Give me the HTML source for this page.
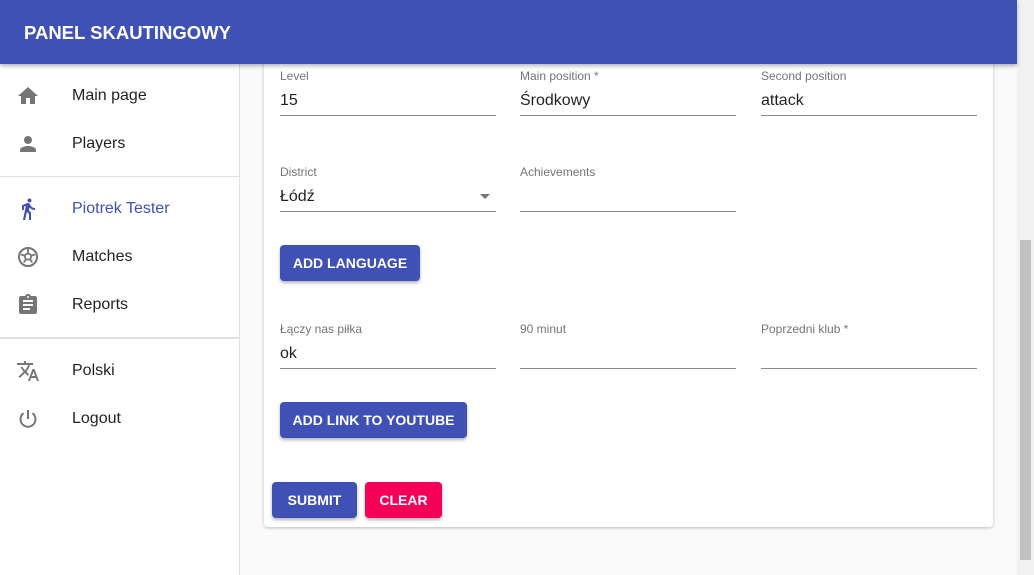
<!DOCTYPE html>
<html><head><meta charset="utf-8"><style>
*{box-sizing:border-box;margin:0;padding:0}
body{width:1034px;height:575px;overflow:hidden;background:#fafafa;font-family:"Liberation Sans",sans-serif;position:relative}
.hdr{position:absolute;left:0;top:0;width:1017px;height:64px;background:#3f51b5;box-shadow:0 2px 4px rgba(0,0,0,.3);z-index:5;color:#fff;font-weight:bold;font-size:18.5px;padding:22px 24px}
.side{position:absolute;left:0;top:0;width:240px;height:575px;background:#fff;border-right:1px solid #e0e0e0}
.it{position:absolute;left:0;width:239px;height:48px;font-size:16px;color:rgba(0,0,0,.87)}
.it span{position:absolute;left:72px;top:15px}
.it svg{position:absolute;left:16px;top:12px}
.hr{position:absolute;left:0;width:239px;height:1px;background:#e0e0e0}
.scroll{position:absolute;left:1017px;top:0;width:17px;height:575px;background:#f1f1f1}
.thumb{position:absolute;left:1020px;top:240px;width:11px;height:320px;background:#c1c1c1}
.card{position:absolute;left:264px;top:40px;width:729px;height:487px;background:#fff;box-shadow:0 1px 3px rgba(0,0,0,.25);border-radius:4px}
.f{position:absolute;width:216px;height:50px;border-bottom:1px solid #8a8a8a}
.f .l{position:absolute;top:3px;left:0;font-size:12px;color:#757575}
.f .v{position:absolute;top:26px;left:0;font-size:16px;color:rgba(0,0,0,.87)}
.btn{position:absolute;height:36px;background:#3f51b5;color:#fff;font-weight:bold;font-size:14px;border-radius:4px;box-shadow:0 2px 3px rgba(0,0,0,.3);text-align:center;line-height:36px}
</style></head><body>
<div class="side">
<div class="it" style="top:72px"><svg width="24" height="24" viewBox="0 0 24 24"><path d="M10 20v-6h4v6h5v-8h3L12 3 2 12h3v8z" fill="#757575"/></svg><span>Main page</span></div>
<div class="it" style="top:120px"><svg width="24" height="24" viewBox="0 0 24 24"><path d="M12 12c2.2 0 4-1.8 4-4s-1.8-4-4-4-4 1.8-4 4 1.8 4 4 4zm0 2c-2.7 0-8 1.3-8 4v2h16v-2c0-2.7-5.3-4-8-4z" fill="#757575"/></svg><span>Players</span></div>
<div class="hr" style="top:176px"></div>
<div class="it" style="top:185px;color:#3f51b5"><svg width="24" height="24" viewBox="0 0 24 24"><path d="M13.5 5.5c1.1 0 2-.9 2-2s-.9-2-2-2-2 .9-2 2 .9 2 2 2zM9.8 8.9L7 23h2.1l1.8-8 2.1 2v6h2v-7.5l-2.1-2 .6-3C14.8 12 16.8 13 19 13v-2c-1.9 0-3.5-1-4.3-2.4l-1-1.6c-.4-.6-1-1-1.7-1-.3 0-.5.1-.8.1L6 8.3V13h2V9.6l1.8-.7" fill="#3f51b5"/></svg><span>Piotrek Tester</span></div>
<div class="it" style="top:233px"><svg width="24" height="24" viewBox="0 0 24 24"><circle cx="12" cy="12" r="9" fill="none" stroke="#757575" stroke-width="2"/><path d="M12 8l3.5 2.5-1.3 4h-4.4l-1.3-4z M12 8V4 M15.5 10.5l3.5-1 M14.2 14.5l2 3 M9.8 14.5l-2 3 M8.5 10.5l-3.5-1" fill="none" stroke="#757575" stroke-width="1.8"/></svg><span>Matches</span></div>
<div class="it" style="top:281px"><svg width="24" height="24" viewBox="0 0 24 24"><path d="M19 3h-4.2C14.4 1.8 13.3 1 12 1s-2.4.8-2.8 2H5c-1.1 0-2 .9-2 2v14c0 1.1.9 2 2 2h14c1.1 0 2-.9 2-2V5c0-1.1-.9-2-2-2zm-7 0c.6 0 1 .4 1 1s-.4 1-1 1-1-.4-1-1 .4-1 1-1zm2 14H7v-2h7v2zm3-4H7v-2h10v2zm0-4H7V7h10v2z" fill="#757575"/></svg><span>Reports</span></div>
<div class="hr" style="top:337px;height:2px"></div>
<div class="it" style="top:347px"><svg width="24" height="24" viewBox="0 0 24 24"><path d="M12.9 15.1l-2.5-2.5c1.7-1.9 3-4.2 3.6-6.6H17V4h-7V2H8v2H1v2h11.2c-.7 1.9-1.700 3.8-3.2 5.4-1-1.1-1.8-2.3-2.4-3.4h-2c.7 1.6 1.7 3.2 3 4.6l-5.1 5 1.4 1.4 5-5 3.1 3.1.8-2zm5.6-5.1h-2L12 22h2l1.1-3h4.8l1.1 3h2l-4.5-12zm-2.6 7l1.6-4.3 1.6 4.3h-3.2z" fill="#757575"/></svg><span>Polski</span></div>
<div class="it" style="top:395px"><svg width="24" height="24" viewBox="0 0 24 24"><path d="M12 3v9 M7.5 6.2A7.5 7.5 0 1 0 16.5 6.2" fill="none" stroke="#757575" stroke-width="2"/></svg><span>Logout</span></div>
</div>
<div class="card">
<div class="f" style="left:16px;top:26px"><div class="l">Level</div><div class="v">15</div></div>
<div class="f" style="left:256px;top:26px"><div class="l">Main position *</div><div class="v">Środkowy</div></div>
<div class="f" style="left:497px;top:26px"><div class="l">Second position</div><div class="v">attack</div></div>
<div class="f" style="left:16px;top:122px"><div class="l">District</div><div class="v">Łódź</div><div style="position:absolute;right:6px;top:32px;border:5px solid transparent;border-top-color:#757575"></div></div>
<div class="f" style="left:256px;top:122px"><div class="l">Achievements</div></div>
<div class="btn" style="left:16px;top:205px;width:140px">ADD LANGUAGE</div>
<div class="f" style="left:16px;top:279px"><div class="l">Łączy nas piłka</div><div class="v">ok</div></div>
<div class="f" style="left:256px;top:279px"><div class="l">90 minut</div></div>
<div class="f" style="left:497px;top:279px"><div class="l">Poprzedni klub *</div></div>
<div class="btn" style="left:16px;top:362px;width:187px">ADD LINK TO YOUTUBE</div>
<div class="btn" style="left:8px;top:442px;width:85px">SUBMIT</div>
<div class="btn" style="left:101px;top:442px;width:77px;background:#f50057">CLEAR</div>
</div>
<div class="hdr">PANEL SKAUTINGOWY</div>
<div class="scroll"></div><div class="thumb"></div>
</body></html>
